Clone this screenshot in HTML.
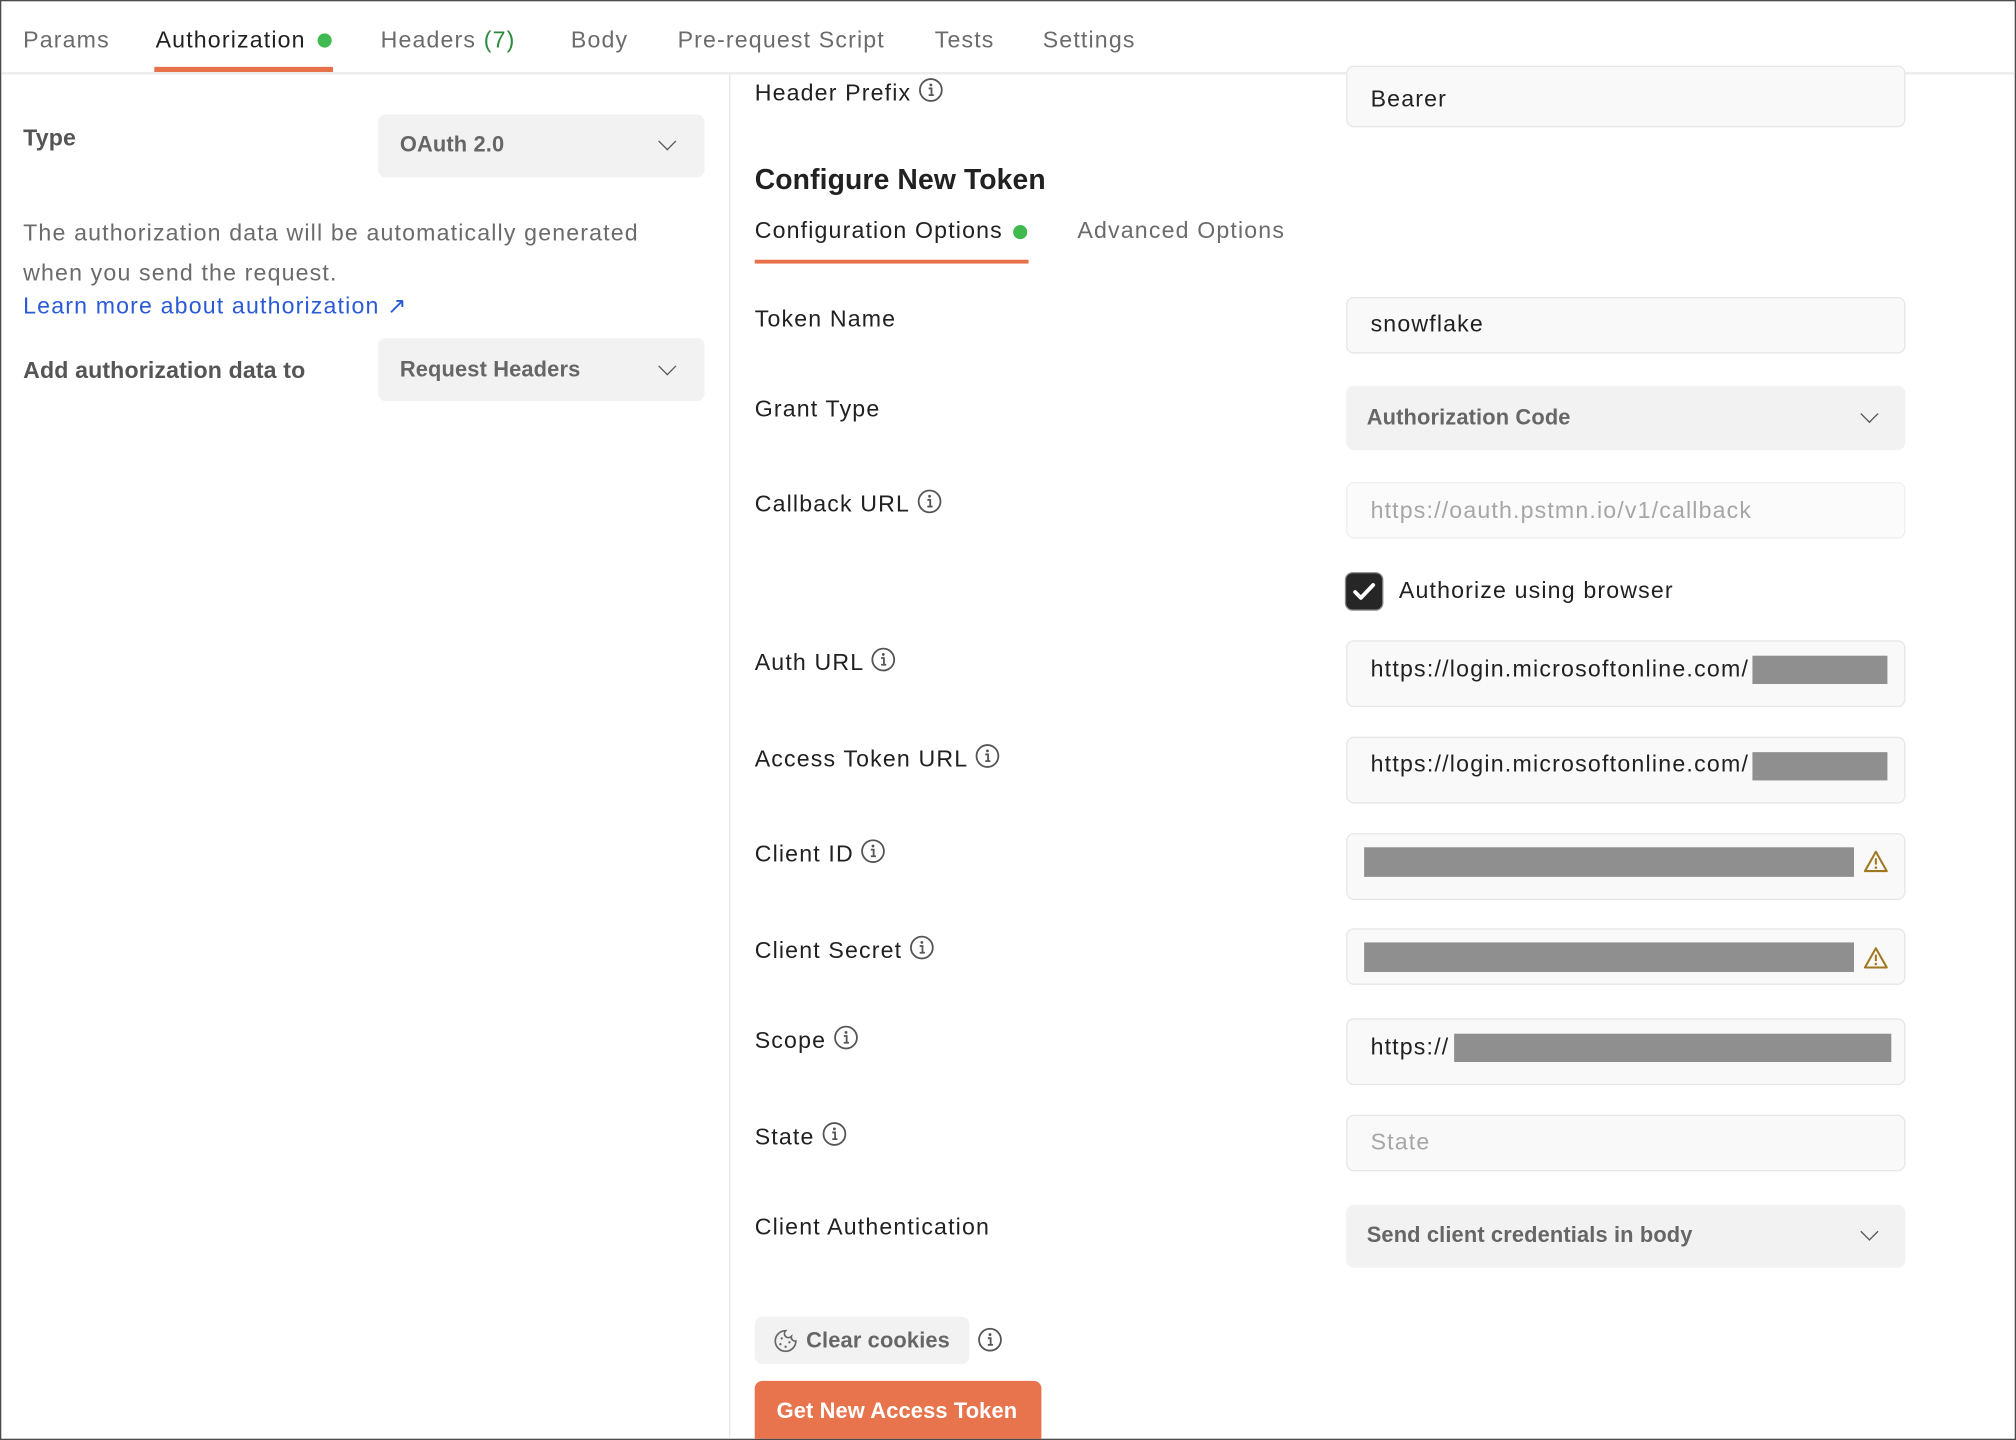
<!DOCTYPE html>
<html><head><meta charset="utf-8"><style>
html,body{margin:0;padding:0;background:#fff;overflow:hidden;width:2016px;height:1440px}
#wrap{position:absolute;left:0;top:0;width:1566px;height:1118px;transform:scale(1.285714);transform-origin:0 0;border:1px solid #4a4a4a;font-family:"Liberation Sans",sans-serif;font-size:18px;color:#212121;overflow:hidden}
.a{position:absolute;white-space:nowrap;line-height:24px;letter-spacing:0.9px}
.t{color:#6b6b6b}
.sb{font-weight:bold;letter-spacing:0.1px}
.box{position:absolute;border-radius:6px;box-sizing:border-box}
.dd{background:#f2f2f2}
.inp{background:#f9f9f9;border:1px solid #e6e6e6}
.red{position:absolute;background:#8f8f8f}
.ic{display:inline-block;vertical-align:-2px;margin-left:5px}
.chev{position:absolute;width:9px;height:9px;border-right:1.5px solid #555;border-bottom:1.5px solid #555;transform:rotate(45deg)}
</style></head><body><div id="wrap">
<svg width="0" height="0" style="position:absolute"><defs><symbol id="info" viewBox="0 0 20 20"><circle cx="10" cy="10" r="8.5" fill="none" stroke="#555" stroke-width="1.4"/><circle cx="10" cy="6" r="1.1" fill="#555"/><path d="M8.3 8.8h2.2v5M8.3 14h4" fill="none" stroke="#555" stroke-width="1.4"/></symbol>
<symbol id="warn" viewBox="0 0 20 20"><path d="M10 2.5L18.5 17.5H1.5Z" fill="none" stroke="#a07820" stroke-width="1.6" stroke-linejoin="round"/><path d="M10 7.5v5" stroke="#a07820" stroke-width="1.6"/><circle cx="10" cy="14.8" r="1" fill="#a07820"/></symbol></defs></svg>
<!-- tabs -->
<div class="a t" style="left:17px;top:18px">Params</div>
<div class="a" style="left:120px;top:18px;color:#212121">Authorization</div>
<div style="position:absolute;left:246px;top:25px;width:11px;height:11px;border-radius:50%;background:#3fb950"></div>
<div style="position:absolute;left:119px;top:51px;width:139px;height:4px;background:#e8704a"></div>
<div class="a t" style="left:295px;top:18px">Headers <span style="color:#2b8a3e">(7)</span></div>
<div class="a t" style="left:443px;top:18px">Body</div>
<div class="a t" style="left:526px;top:18px">Pre-request Script</div>
<div class="a t" style="left:726px;top:18px">Tests</div>
<div class="a t" style="left:810px;top:18px">Settings</div>
<div style="position:absolute;left:0;top:55px;width:1568px;height:2px;background:#ededed"></div>
<div style="position:absolute;left:566px;top:57px;width:1px;height:1100px;background:#e6e6e6"></div>
<!-- left -->
<div class="a t sb" style="left:17px;top:94px;color:#555">Type</div>
<div class="box dd" style="left:293px;top:88px;width:254px;height:49px"></div>
<div class="a sb" style="left:310px;top:100px;color:#666;font-size:17px">OAuth 2.0</div>
<div class="chev" style="left:513px;top:104px"></div>
<div class="a t" style="left:17px;top:165px;line-height:31px">The authorization data will be automatically generated<br>when you send the request.</div>
<div class="a" style="left:17px;top:225px;color:#2a5bd7">Learn more about authorization ↗</div>
<div class="a sb" style="left:17px;top:275px;color:#555">Add authorization data to</div>
<div class="box dd" style="left:293px;top:262px;width:254px;height:49px"></div>
<div class="a sb" style="left:310px;top:275px;color:#666;font-size:17px">Request Headers</div>
<div class="chev" style="left:513px;top:279px"></div>
<!-- right -->
<div class="a" style="left:586px;top:59px">Header Prefix<svg class="ic" width="20" height="20"><use href="#info"/></svg></div>
<div class="box inp" style="left:1046px;top:50px;width:435px;height:48px"></div>
<div class="a" style="left:1065px;top:64px">Bearer</div>
<div class="a sb" style="left:586px;top:125px;font-size:22px;line-height:28px">Configure New Token</div>
<div class="a" style="left:586px;top:166px">Configuration Options</div>
<div style="position:absolute;left:787px;top:174px;width:11px;height:11px;border-radius:50%;background:#3fb950"></div>
<div style="position:absolute;left:586px;top:201px;width:213px;height:3px;background:#e8704a"></div>
<div class="a t" style="left:837px;top:166px">Advanced Options</div>

<div class="a" style="left:586px;top:235px">Token Name</div>
<div class="box inp" style="left:1046px;top:230px;width:435px;height:44px"></div>
<div class="a" style="left:1065px;top:239px">snowflake</div>

<div class="a" style="left:586px;top:305px">Grant Type</div>
<div class="box dd" style="left:1046px;top:299px;width:435px;height:50px"></div>
<div class="a sb" style="left:1062px;top:312px;color:#666;font-size:17px">Authorization Code</div>
<div class="chev" style="left:1448px;top:316px"></div>

<div class="a" style="left:586px;top:379px">Callback URL<svg class="ic" width="20" height="20"><use href="#info"/></svg></div>
<div class="box inp" style="left:1046px;top:374px;width:435px;height:44px;background:#fbfbfb;border-color:#efefef"></div>
<div class="a" style="left:1065px;top:384px;color:#a6a6a6">https://oauth.pstmn.io/v1/callback</div>

<div style="position:absolute;left:1046px;top:445px;width:28px;height:28px;border-radius:5px;background:#262626;box-shadow:0 0 0 1px #888"></div>
<svg style="position:absolute;left:1049px;top:448px" width="22" height="22"><path d="M4 11.5l4.5 4.5L18 6" fill="none" stroke="#fff" stroke-width="3" stroke-linecap="round" stroke-linejoin="round"/></svg>
<div class="a" style="left:1087px;top:446px">Authorize using browser</div>

<div class="a" style="left:586px;top:502px">Auth URL<svg class="ic" width="20" height="20"><use href="#info"/></svg></div>
<div class="box inp" style="left:1046px;top:497px;width:435px;height:52px"></div>
<div class="a" style="left:1065px;top:507px;letter-spacing:0.95px">https://login.microsoftonline.com/</div>
<div class="red" style="left:1362px;top:509px;width:105px;height:22px"></div>

<div class="a" style="left:586px;top:577px">Access Token URL<svg class="ic" width="20" height="20"><use href="#info"/></svg></div>
<div class="box inp" style="left:1046px;top:572px;width:435px;height:52px"></div>
<div class="a" style="left:1065px;top:581px;letter-spacing:0.95px">https://login.microsoftonline.com/</div>
<div class="red" style="left:1362px;top:584px;width:105px;height:22px"></div>

<div class="a" style="left:586px;top:651px">Client ID<svg class="ic" width="20" height="20"><use href="#info"/></svg></div>
<div class="box inp" style="left:1046px;top:647px;width:435px;height:52px"></div>
<div class="red" style="left:1060px;top:658px;width:381px;height:23px"></div>
<svg style="position:absolute;left:1448px;top:659px" width="20" height="20"><use href="#warn"/></svg>

<div class="a" style="left:586px;top:726px">Client Secret<svg class="ic" width="20" height="20"><use href="#info"/></svg></div>
<div class="box inp" style="left:1046px;top:721px;width:435px;height:44px"></div>
<div class="red" style="left:1060px;top:732px;width:381px;height:23px"></div>
<svg style="position:absolute;left:1448px;top:734px" width="20" height="20"><use href="#warn"/></svg>

<div class="a" style="left:586px;top:796px">Scope<svg class="ic" width="20" height="20"><use href="#info"/></svg></div>
<div class="box inp" style="left:1046px;top:791px;width:435px;height:52px"></div>
<div class="a" style="left:1065px;top:801px">https://</div>
<div class="red" style="left:1130px;top:803px;width:340px;height:22px"></div>

<div class="a" style="left:586px;top:871px">State<svg class="ic" width="20" height="20"><use href="#info"/></svg></div>
<div class="box inp" style="left:1046px;top:866px;width:435px;height:44px"></div>
<div class="a" style="left:1065px;top:875px;color:#a6a6a6">State</div>

<div class="a" style="left:586px;top:941px">Client Authentication</div>
<div class="box dd" style="left:1046px;top:936px;width:435px;height:49px"></div>
<div class="a sb" style="left:1062px;top:948px;color:#666;font-size:17px">Send client credentials in body</div>
<div class="chev" style="left:1448px;top:952px"></div>

<div class="box dd" style="left:586px;top:1023px;width:167px;height:37px"></div>
<svg style="position:absolute;left:600px;top:1032px" width="20" height="20"><path d="M10 2a8 8 0 1 0 8 8a3 3 0 0 1-3.5-3.5A3 3 0 0 1 10 2z" fill="none" stroke="#666" stroke-width="1.3"/><circle cx="7" cy="8" r=".9" fill="#666"/><circle cx="6" cy="12.5" r=".9" fill="#666"/><circle cx="10" cy="14.5" r=".9" fill="#666"/><circle cx="13" cy="11" r=".9" fill="#666"/></svg>
<div class="a sb" style="left:626px;top:1030px;color:#666;font-size:17px">Clear cookies</div>
<svg style="position:absolute;left:759px;top:1031px" width="20" height="20"><use href="#info"/></svg>

<div class="box" style="left:586px;top:1073px;width:223px;height:60px;background:#e8744e"></div>
<div class="a sb" style="left:603px;top:1085px;color:#fff;font-size:17px">Get New Access Token</div>
</div></body></html>
